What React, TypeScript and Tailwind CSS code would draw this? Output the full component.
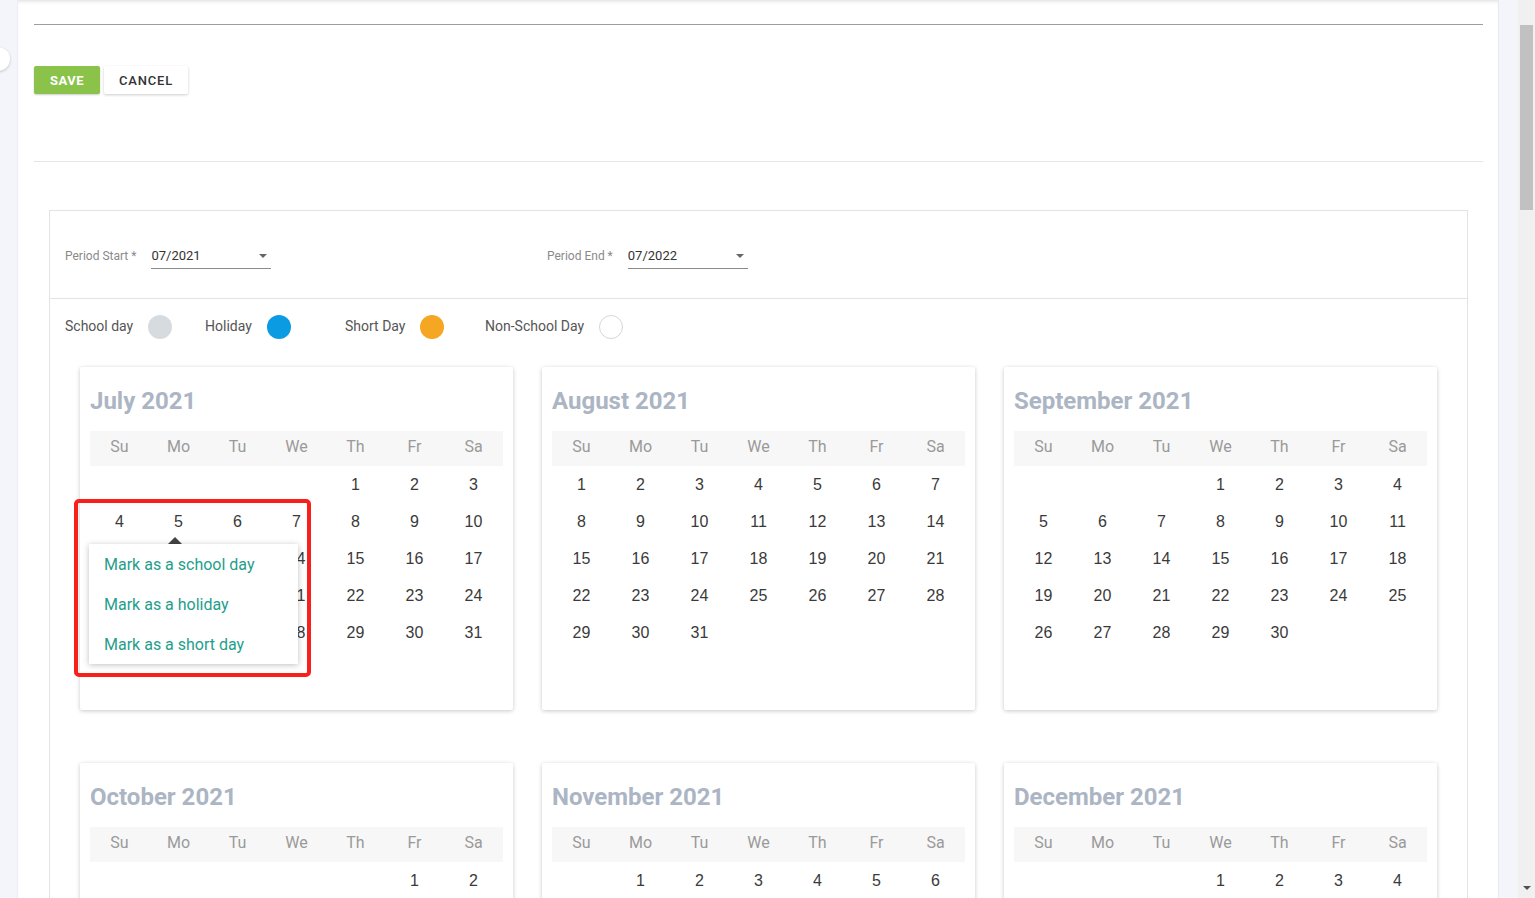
import React from 'react';

const weekdays = ['Su', 'Mo', 'Tu', 'We', 'Th', 'Fr', 'Sa'];

const months = [
  { name: 'July 2021', year: 2021, month: 6 },
  { name: 'August 2021', year: 2021, month: 7 },
  { name: 'September 2021', year: 2021, month: 8 },
  { name: 'October 2021', year: 2021, month: 9 },
  { name: 'November 2021', year: 2021, month: 10 },
  { name: 'December 2021', year: 2021, month: 11 },
];

const legend = [
  { label: 'School day', dot: 'bg-[#d5dbde]' },
  { label: 'Holiday', dot: 'bg-[#0a9be3]' },
  { label: 'Short Day', dot: 'bg-[#f5a623]' },
  { label: 'Non-School Day', dot: 'bg-white border border-[#d6d6d6]' },
];

function buildCells(year: number, month: number) {
  const first = new Date(year, month, 1).getDay();
  const total = new Date(year, month + 1, 0).getDate();
  const cells: (number | null)[] = [];
  for (let i = 0; i < first; i++) cells.push(null);
  for (let d = 1; d <= total; d++) cells.push(d);
  while (cells.length % 7 !== 0) cells.push(null);
  return cells;
}

const MonthCard: React.FC<{ name: string; year: number; month: number; withMenu?: boolean }> = ({
  name,
  year,
  month,
  withMenu,
}) => {
  const cells = buildCells(year, month);
  return (
    <div className="relative h-[343px] rounded-[2px] bg-white px-[10px] pt-[18px] shadow-[0_1px_4px_rgba(0,0,0,0.22)]">
      <div className="h-[32px] text-[24px] leading-[32px] font-bold text-[#abb5c3]">{name}</div>
      <div className="mt-[14px] grid h-[35px] grid-cols-7 items-center bg-[#f7f7f7] pb-[4px]">
        {weekdays.map((w) => (
          <div key={w} className="text-center text-[16px] text-[#9a9a9a]">
            {w}
          </div>
        ))}
      </div>
      <div className="grid grid-cols-7">
        {cells.map((d, i) => (
          <div
            key={i}
            className="flex h-[37px] items-center justify-center text-[16px] text-[#3a3a3a] [font-family:'Liberation_Sans',Arial,sans-serif]"
          >
            {d ?? ''}
          </div>
        ))}
      </div>

      {withMenu && (
        <>
          <div className="absolute left-[88px] top-[170px] z-20 h-0 w-0 border-x-[7px] border-b-[7px] border-x-transparent border-b-[#444]" />
          <div className="absolute left-[9px] top-[177px] z-20 w-[209px] bg-white shadow-[0_1px_6px_rgba(0,0,0,0.25)]">
            {['Mark as a school day', 'Mark as a holiday', 'Mark as a short day'].map((t) => (
              <div key={t} className="flex h-[40px] items-center px-[15px] pt-[1px] text-[16px] text-[#1f9e8c]">
                {t}
              </div>
            ))}
          </div>
          <div className="absolute left-[-6px] top-[132px] z-30 h-[178px] w-[237px] rounded-[5px] border-4 border-[#f8201a]" />
        </>
      )}
    </div>
  );
};

const PeriodSelect: React.FC<{ value: string }> = ({ value }) => (
  <div className="relative h-[22px] w-[120px] border-b border-[#8a8a8a] text-[13px] leading-[18px] text-[#333]">
    {value}
    <div className="absolute right-[4px] top-[7px] h-0 w-0 border-x-[4px] border-t-[4px] border-x-transparent border-t-[#666]" />
  </div>
);

export default function App() {
  return (
    <div className="relative flex h-[898px] w-[1535px] overflow-hidden bg-[#f4f5fa] [font-family:Roboto,'Liberation_Sans',sans-serif]">
      <div className="w-[18px] shrink-0 border-r border-[#eceef4] bg-[#f4f5fa]" />
      <div className="absolute left-[-14px] top-[47px] z-10 h-[24px] w-[24px] rounded-full bg-white shadow-[0_1px_3px_rgba(0,0,0,0.2)]" />

      <div className="w-[1480px] shrink-0 bg-white pl-4 pr-[15px] shadow-[inset_0_4px_4px_-3px_rgba(0,0,0,0.15)]">
        <div className="pt-6">
          <div className="border-t border-[#9e9e9e]" />
        </div>

        <div className="mt-[41px] flex gap-1">
          <button className="flex h-7 w-[66px] items-center justify-center rounded-[2px] bg-[#8bc34a] pt-[1px] text-[13px] font-bold tracking-[0.5px] text-white shadow-[0_1px_2px_rgba(0,0,0,0.2)]">
            SAVE
          </button>
          <button className="flex h-7 w-[84px] items-center justify-center rounded-[2px] bg-white pt-[1px] text-[13px] font-medium tracking-[0.8px] text-[#333] shadow-[0_1px_3px_rgba(0,0,0,0.2)]">
            CANCEL
          </button>
        </div>

        <div className="mt-[67px] border-t border-[#e6e6e6]" />

        <div className="mx-[15px] mt-12 border border-[#e3e3e3]">
          <div className="flex h-[88px] border-b border-[#e3e3e3] px-[15px] pt-[36px]">
            <div className="flex w-[482px] items-start gap-[15px]">
              <span className="text-[12px] leading-[18px] text-[#8a8a8a]">Period Start *</span>
              <PeriodSelect value="07/2021" />
            </div>
            <div className="flex items-start gap-[15px]">
              <span className="text-[12px] leading-[18px] text-[#8a8a8a]">Period End *</span>
              <PeriodSelect value="07/2022" />
            </div>
          </div>

          <div className="flex px-[15px] pt-[16px]">
            {legend.map((l) => (
              <div key={l.label} className="flex h-[24px] w-[140px] items-center gap-[15px]">
                <span className="pb-[2px] text-[14px] text-[#555]">{l.label}</span>
                <span className={`h-[24px] w-[24px] rounded-full ${l.dot}`} />
              </div>
            ))}
          </div>

          <div className="mt-[28px] grid grid-cols-3 gap-x-[29px] gap-y-[53px] px-[30px] pb-10">
            {months.map((m, i) => (
              <MonthCard key={m.name} name={m.name} year={m.year} month={m.month} withMenu={i === 0} />
            ))}
          </div>
        </div>
      </div>

      <div className="w-[20px] shrink-0 border-l border-[#e8eaf0] bg-[#f4f5fa]" />

      <div className="flex w-[17px] shrink-0 flex-col bg-[#f0f0f0]">
        <div className="mx-[2px] mt-[25px] h-[185px] bg-[#c1c1c1]" />
        <div className="mx-auto mb-[8px] mt-auto h-0 w-0 border-x-[4px] border-t-[4px] border-x-transparent border-t-[#505050]" />
      </div>
    </div>
  );
}
